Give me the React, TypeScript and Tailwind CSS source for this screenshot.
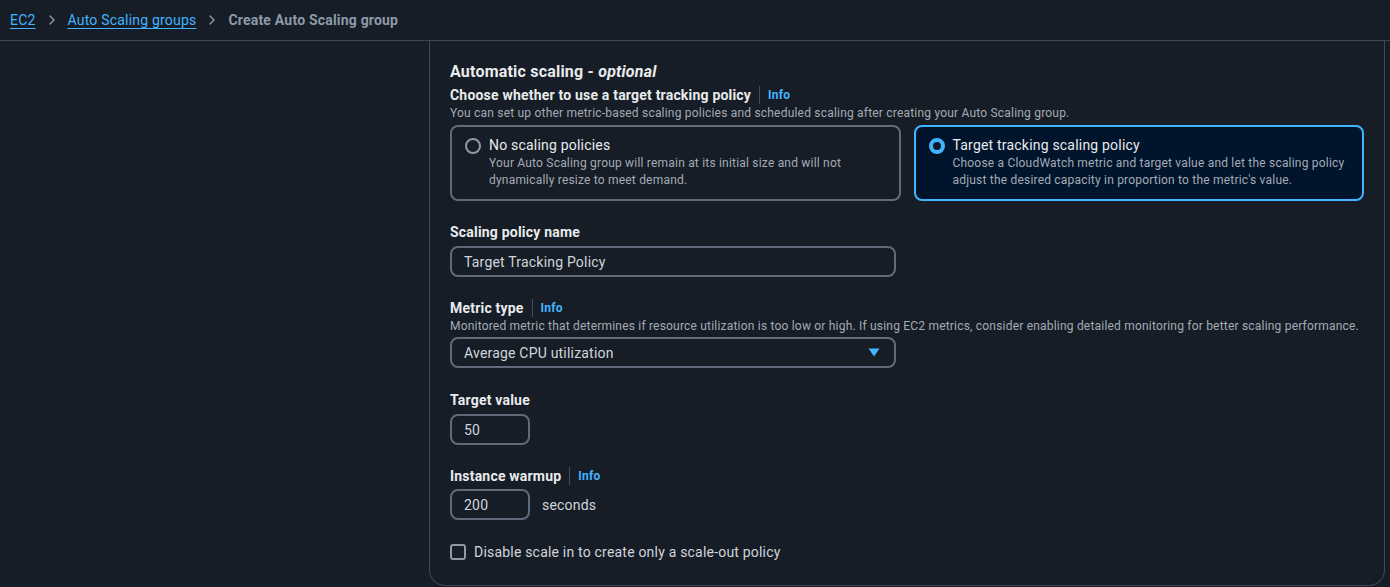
import { ChevronRight } from "lucide-react";

const font = { fontFamily: 'Roboto, "Noto Sans", Arial, sans-serif' };

const Info = () => (
  <span className="flex items-center">
    <span className="mx-2 h-[18px] w-px bg-[#414d5c]" />
    <span className="text-xs font-bold text-[#42b4ff]">Info</span>
  </span>
);

const Label = ({ text, info }: { text: string; info?: boolean }) => (
  <div className="flex items-center h-[20px]">
    <span className="text-sm font-bold text-[#e9ebed]">{text}</span>
    {info && <Info />}
  </div>
);

const Tile = ({
  title,
  desc,
  selected,
}: {
  title: string;
  desc: string;
  selected?: boolean;
}) => (
  <div
    className={
      selected
        ? "flex-1 rounded-lg border-2 border-[#42b4ff] bg-[#00142b] px-[13px] pt-[8px] pb-[10px] flex gap-2"
        : "flex-1 rounded-lg border-2 border-[#5f6b7a] px-[13px] pt-[8px] pb-[10px] flex gap-2"
    }
  >
    <div className="pt-[3px]">
      {selected ? (
        <div className="w-4 h-4 rounded-full border-[4px] border-[#42b4ff] bg-[#0f1b2a] flex items-center justify-center">
          <div className="w-[6px] h-[6px] rounded-full bg-[#0f1b2a]" />
        </div>
      ) : (
        <div className="w-4 h-4 rounded-full border-2 border-[#8d99a8]" />
      )}
    </div>
    <div className="flex flex-col">
      <span className="text-sm leading-5 text-[#e9ebed]">{title}</span>
      <span className="text-xs leading-[17px] text-[#a4abb5]">{desc}</span>
    </div>
  </div>
);

const Input = ({ value, className }: { value: string; className: string }) => (
  <div
    className={
      "h-[31px] rounded-lg border-2 border-[#5f6b7a] px-[12px] flex items-center text-sm text-[#d1d5db] " +
      className
    }
  >
    {value}
  </div>
);

export default function App() {
  return (
    <div
      className="w-[1390px] h-[587px] bg-[#161d26] overflow-hidden flex flex-col tracking-[0.2px]"
      style={font}
    >
      <div className="h-[41px] shrink-0 border-b border-[#424650] flex items-center px-[10px] text-sm gap-2">
        <span className="text-[#42b4ff] underline underline-offset-[3px]">EC2</span>
        <ChevronRight className="w-4 h-4 text-[#8d99a8]" strokeWidth={2} />
        <span className="text-[#42b4ff] underline underline-offset-[3px]">Auto Scaling groups</span>
        <ChevronRight className="w-4 h-4 text-[#8d99a8]" strokeWidth={2} />
        <span className="font-bold text-[#8d99a8]">Create Auto Scaling group</span>
      </div>
      <div className="flex">
        <div className="w-[429px] shrink-0" />
        <div className="w-[956px] h-[545px] border border-t-0 border-[#424650] rounded-b-2xl px-5 pt-[19px]">
          <h2 className="text-base font-bold text-[#e9ebed] leading-6 mb-[1px]">
            Automatic scaling - <i>optional</i>
          </h2>
          <Label text="Choose whether to use a target tracking policy" info />
          <p className="text-xs leading-4 text-[#a4abb5]">
            You can set up other metric-based scaling policies and scheduled scaling after creating your Auto Scaling group.
          </p>
          <div className="flex gap-[13px] mt-[4px] w-[914px]">
            <Tile
              title="No scaling policies"
              desc="Your Auto Scaling group will remain at its initial size and will not dynamically resize to meet demand."
            />
            <Tile
              selected
              title="Target tracking scaling policy"
              desc="Choose a CloudWatch metric and target value and let the scaling policy adjust the desired capacity in proportion to the metric's value."
            />
          </div>

          <div className="mt-[21px]">
            <Label text="Scaling policy name" />
            <Input value="Target Tracking Policy" className="w-[446px] mt-[4px]" />
          </div>

          <div className="mt-[21px]">
            <Label text="Metric type" info />
            <p className="text-xs leading-4 text-[#a4abb5]">
              Monitored metric that determines if resource utilization is too low or high. If using EC2 metrics, consider enabling detailed monitoring for better scaling performance.
            </p>
            <div className="w-[446px] mt-[3px] h-[31px] rounded-lg border-2 border-[#5f6b7a] pl-[12px] pr-[14px] flex items-center justify-between text-sm text-[#d1d5db]">
              <span>Average CPU utilization</span>
              <svg width="12" height="9" viewBox="0 0 12 9">
                <path d="M0.5 0.5 H11.5 L6 8.5 Z" fill="#42b4ff" />
              </svg>
            </div>
          </div>

          <div className="mt-[22px]">
            <Label text="Target value" />
            <Input value="50" className="w-[80px] mt-[4px]" />
          </div>

          <div className="mt-[21px]">
            <Label text="Instance warmup" info />
            <div className="flex items-center gap-3 mt-[3px]">
              <Input value="200" className="w-[80px]" />
              <span className="text-sm text-[#d1d5db]">seconds</span>
            </div>
          </div>

          <div className="flex items-center gap-2 mt-[22px]">
            <div className="w-4 h-4 rounded-[3px] border-2 border-[#8d99a8]" />
            <span className="text-sm text-[#d1d5db]">Disable scale in to create only a scale-out policy</span>
          </div>
        </div>
      </div>
    </div>
  );
}
